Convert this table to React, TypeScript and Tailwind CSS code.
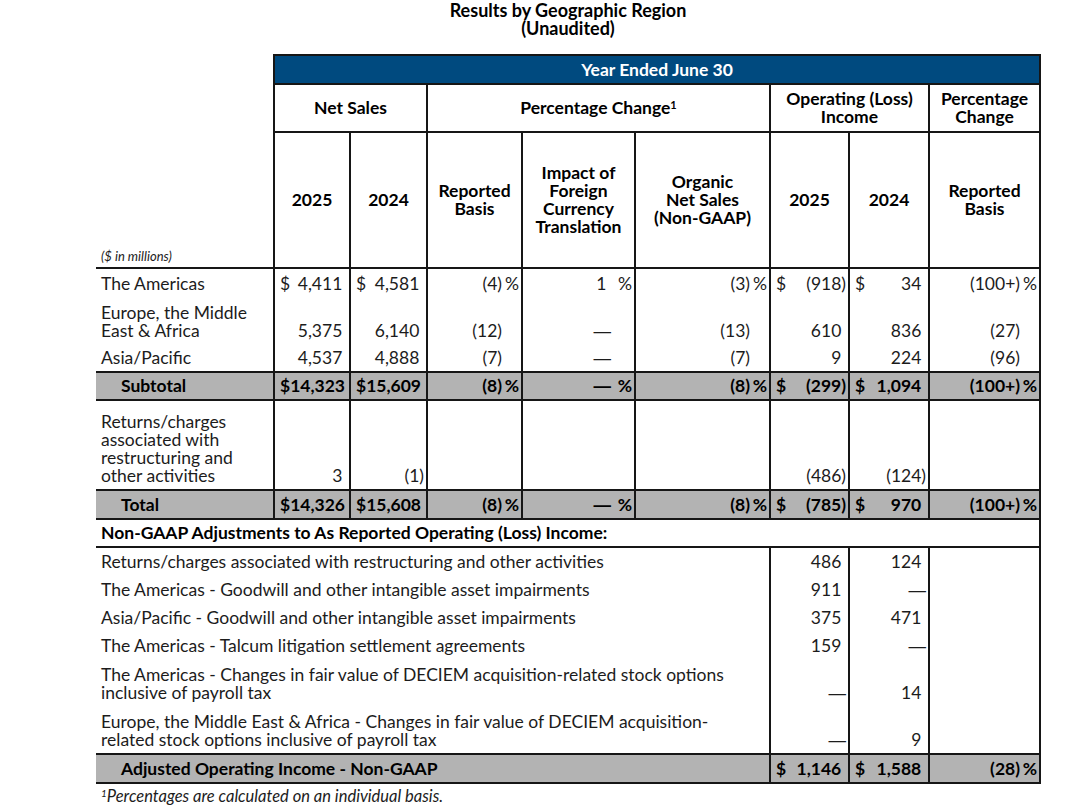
import React from "react";

type Val = { v?: string; d?: boolean; p?: boolean };

const BORDER = "border-[#161616]";
const GRAY = "bg-[#b3b3b3]";

// suffix widths for the % columns
const SFX: Record<string, string> = {
  rb: "w-[17px]",
  fx: "w-[21px]",
  org: "w-[17px]",
  rb2: "w-[17px]",
};

const Dash = () => <span className="[font-family:'Liberation_Sans',sans-serif]">—</span>;

const Amt = ({
  val,
  col,
  h,
  edge,
}: {
  val: Val;
  col: string;
  h: string;
  edge: string;
}) => {
  const v = val.v ?? "";
  const sfx = SFX[col];
  return (
    <td className={`border-x-2 ${BORDER} ${edge} ${h} align-bottom pl-[5px] pr-[2px] pb-[4px] leading-[18px] whitespace-nowrap`}>
      <div className="flex items-end">
        {val.d && <span>$</span>}
        <span className="flex-1 text-right">
          {v === "—" ? <Dash /> : v}
          {/\d$/.test(v) && <span className="invisible">)</span>}
        </span>
        {sfx && <span className={`${sfx} text-right`}>{val.p ? "%" : ""}</span>}
      </div>
    </td>
  );
};

const COLS = ["ns25", "ns24", "rb", "fx", "org", "oi25", "oi24", "rb2"];

type Row = {
  label: React.ReactNode;
  h: string;
  total?: boolean;
  vals: Val[];
};

const regionRows: Row[] = [
  {
    label: "The Americas",
    h: "h-[29px]",
    vals: [
      { v: "4,411", d: true },
      { v: "4,581", d: true },
      { v: "(4)", p: true },
      { v: "1", p: true },
      { v: "(3)", p: true },
      { v: "(918)", d: true },
      { v: "34", d: true },
      { v: "(100+)", p: true },
    ],
  },
  {
    label: (
      <>
        Europe, the Middle
        <br />
        East &amp; Africa
      </>
    ),
    h: "h-[47px]",
    vals: [{ v: "5,375" }, { v: "6,140" }, { v: "(12)" }, { v: "—" }, { v: "(13)" }, { v: "610" }, { v: "836" }, { v: "(27)" }],
  },
  {
    label: "Asia/Pacific",
    h: "h-[28px]",
    vals: [{ v: "4,537" }, { v: "4,888" }, { v: "(7)" }, { v: "—" }, { v: "(7)" }, { v: "9" }, { v: "224" }, { v: "(96)" }],
  },
  {
    label: "Subtotal",
    h: "h-[28px]",
    total: true,
    vals: [
      { v: "$14,323" },
      { v: "$15,609" },
      { v: "(8)", p: true },
      { v: "—", p: true },
      { v: "(8)", p: true },
      { v: "(299)", d: true },
      { v: "1,094", d: true },
      { v: "(100+)", p: true },
    ],
  },
  {
    label: (
      <>
        Returns/charges
        <br />
        associated with
        <br />
        restructuring and
        <br />
        other activities
      </>
    ),
    h: "h-[90px]",
    vals: [{ v: "3" }, { v: "(1)" }, {}, {}, {}, { v: "(486)" }, { v: "(124)" }, {}],
  },
  {
    label: "Total",
    h: "h-[29px]",
    total: true,
    vals: [
      { v: "$14,326" },
      { v: "$15,608" },
      { v: "(8)", p: true },
      { v: "—", p: true },
      { v: "(8)", p: true },
      { v: "(785)", d: true },
      { v: "970", d: true },
      { v: "(100+)", p: true },
    ],
  },
];

const adjRows: { label: React.ReactNode; h: string; a: string; b: string }[] = [
  { label: "Returns/charges associated with restructuring and other activities", h: "h-[28px]", a: "486", b: "124" },
  { label: "The Americas - Goodwill and other intangible asset impairments", h: "h-[28px]", a: "911", b: "—" },
  { label: "Asia/Pacific - Goodwill and other intangible asset impairments", h: "h-[28px]", a: "375", b: "471" },
  { label: "The Americas - Talcum litigation settlement agreements", h: "h-[28px]", a: "159", b: "—" },
  {
    label: (
      <>
        The Americas - Changes in fair value of DECIEM acquisition-related stock options
        <br />
        inclusive of payroll tax
      </>
    ),
    h: "h-[47px]",
    a: "—",
    b: "14",
  },
  {
    label: (
      <>
        Europe, the Middle East &amp; Africa - Changes in fair value of DECIEM acquisition-
        <br />
        related stock options inclusive of payroll tax
      </>
    ),
    h: "h-[48px]",
    a: "—",
    b: "9",
  },
];

const Head = ({ children, span = 1 }: { children: React.ReactNode; span?: number }) => (
  <th colSpan={span} className={`border-2 ${BORDER} font-bold text-center align-middle leading-[18px]`}>
    {children}
  </th>
);

export default function App() {
  return (
    <div className="w-[1082px] h-[808px] overflow-hidden bg-white text-[#1c1c1c] [font-family:Lato,sans-serif] text-[17.5px] pl-[96px]">
      <div className="w-[944px] pt-[1px] text-center font-bold leading-[18px] text-[18px] text-black">
        <div>Results by Geographic Region</div>
        <div>(Unaudited)</div>
      </div>

      <table className="mt-[17px] w-[944px] table-fixed border-collapse">
        <colgroup>
          <col className="w-[178px]" />
          <col className="w-[76px]" />
          <col className="w-[77px]" />
          <col className="w-[95px]" />
          <col className="w-[113px]" />
          <col className="w-[135px]" />
          <col className="w-[79px]" />
          <col className="w-[80px]" />
          <col className="w-[111px]" />
        </colgroup>
        <thead className="text-black text-[17.5px]">
          <tr>
            <td className="h-[29px]" />
            <th colSpan={8} className={`border-2 ${BORDER} bg-[#004a7f] text-white font-bold text-center leading-[18px]`}>
              Year Ended June 30
            </th>
          </tr>
          <tr>
            <td className="h-[48px]" />
            <Head span={2}>Net Sales</Head>
            <Head span={3}>
              Percentage Change<sup className="text-[11px]">1</sup>
            </Head>
            <Head span={2}>
              Operating (Loss)
              <br />
              Income
            </Head>
            <Head>
              Percentage
              <br />
              Change
            </Head>
          </tr>
          <tr>
            <td className={`h-[136px] border-b-2 ${BORDER} align-bottom pl-[5px] pb-[3px] italic font-normal text-[13px] leading-[16px] text-[#1c1c1c]`}>
              ($ in millions)
            </td>
            <Head>2025</Head>
            <Head>2024</Head>
            <Head>
              Reported
              <br />
              Basis
            </Head>
            <Head>
              Impact of
              <br />
              Foreign
              <br />
              Currency
              <br />
              Translation
            </Head>
            <Head>
              Organic
              <br />
              Net Sales
              <br />
              (Non-GAAP)
            </Head>
            <Head>2025</Head>
            <Head>2024</Head>
            <Head>
              Reported
              <br />
              Basis
            </Head>
          </tr>
        </thead>
        <tbody>
          {regionRows.map((r, i) => {
            const edge = r.total ? `border-y-2 ${BORDER}` : "";
            return (
              <tr key={i} className={r.total ? `${GRAY} font-bold text-black` : ""}>
                <td className={`${edge} ${r.h} align-bottom pb-[4px] leading-[18px] ${r.total ? "pl-[25px]" : "pl-[5px]"}`}>
                  {r.label}
                </td>
                {r.vals.map((v, j) => (
                  <Amt key={j} val={v} col={COLS[j]} h={r.h} edge={edge} />
                ))}
              </tr>
            );
          })}
          <tr>
            <td
              colSpan={9}
              className={`h-[28px] border-b-2 border-r-2 ${BORDER} align-bottom pl-[5px] pb-[4px] leading-[18px] font-bold text-black`}
            >
              Non-GAAP Adjustments to As Reported Operating (Loss) Income:
            </td>
          </tr>
          {adjRows.map((r, i) => (
            <tr key={i}>
              <td colSpan={6} className={`${r.h} align-bottom pl-[5px] pb-[4px] leading-[18px]`}>
                {r.label}
              </td>
              <Amt val={{ v: r.a }} col="oi25" h={r.h} edge="" />
              <Amt val={{ v: r.b }} col="oi24" h={r.h} edge="" />
              <Amt val={{}} col="rb2" h={r.h} edge="" />
            </tr>
          ))}
          <tr className={`${GRAY} font-bold text-black`}>
            <td colSpan={6} className={`h-[29px] border-y-2 ${BORDER} align-bottom pl-[25px] pb-[4px] leading-[18px]`}>
              Adjusted Operating Income - Non-GAAP
            </td>
            <Amt val={{ v: "1,146", d: true }} col="oi25" h="h-[29px]" edge={`border-y-2 ${BORDER}`} />
            <Amt val={{ v: "1,588", d: true }} col="oi24" h="h-[29px]" edge={`border-y-2 ${BORDER}`} />
            <Amt val={{ v: "(28)", p: true }} col="rb2" h="h-[29px]" edge={`border-y-2 ${BORDER}`} />
          </tr>
        </tbody>
      </table>

      <div className="pl-[5px] pt-[3px] italic text-[16.5px] leading-[18px] text-[#1c1c1c]">
        <sup className="text-[10px]">1</sup>Percentages are calculated on an individual basis.
      </div>
    </div>
  );
}
